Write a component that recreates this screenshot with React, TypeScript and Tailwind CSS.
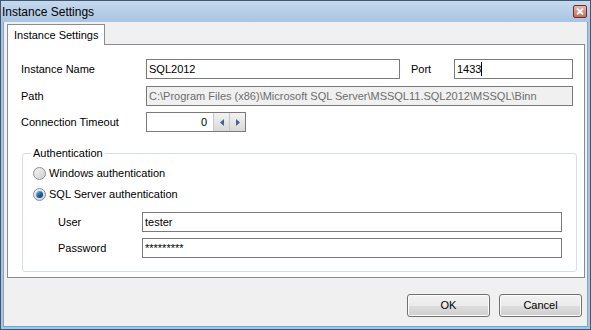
import React from "react";

function TextBox({ value, className = "", disabled = false, caret = false }: { value: string; className?: string; disabled?: boolean; caret?: boolean }) {
  return (
    <div
      className={`h-[20px] border border-[#7a7a7a] flex items-center px-[2px] text-[11px] ${disabled ? "bg-[#f0f0f0] text-[#6d6d6d]" : "bg-white text-black"} ${className}`}
    >
      <span className="whitespace-nowrap">{value}</span>
      {caret && <span className="w-px h-[14px] bg-black" />}
    </div>
  );
}

function Radio({ checked, label }: { checked?: boolean; label: string }) {
  return (
    <div className="flex items-center gap-[3px] h-[14px]">
      <div className="w-[13px] h-[13px] rounded-full border border-[#8e8f8f] bg-gradient-to-br from-[#f4f4f4] to-[#cfcfcf] flex items-center justify-center">
        {checked && (
          <div className="w-[7px] h-[7px] rounded-full bg-gradient-to-br from-[#8fd0f5] via-[#1a6ca8] to-[#0b3c66]" />
        )}
      </div>
      <span className="text-[11px] text-black">{label}</span>
    </div>
  );
}

function SpinArrow({ dir }: { dir: "left" | "right" }) {
  return (
    <div className="w-[16px] h-full bg-gradient-to-b from-[#f3f3f3] to-[#d9d9d9] border-l border-[#c8c8c8] flex items-center justify-center">
      <svg width="4" height="7" viewBox="0 0 4 7">
        {dir === "left" ? <path d="M4 0 L0 3.5 L4 7 Z" fill="#4d6185" /> : <path d="M0 0 L4 3.5 L0 7 Z" fill="#4d6185" />}
      </svg>
    </div>
  );
}

function Button({ label }: { label: string }) {
  return (
    <button className="w-[83px] h-[23px] rounded-[3px] border border-[#707070] bg-[linear-gradient(#f2f2f2_0%,#ebebeb_50%,#dddddd_51%,#cfcfcf_100%)] text-[11px] text-black shadow-[inset_0_0_0_1px_#fcfcfc]">
      {label}
    </button>
  );
}

export default function App() {
  return (
    <div className="w-[591px] h-[330px] bg-[#a9c3e0] border border-[#3e5872] flex flex-col font-['Liberation_Sans',Arial,sans-serif] select-none">
      {/* title bar */}
      <div className="h-[21px] shrink-0 flex items-center justify-between pl-[1px] pr-[3px] bg-gradient-to-b from-[#c6d9ee] to-[#a8c3e1]">
        <span className="text-[12px] text-black">Instance Settings</span>
        <div className="w-[14px] h-[13px] rounded-[2px] border border-[#6e2f25] bg-gradient-to-b from-[#e8b7ab] to-[#c46d5f] flex items-center justify-center">
          <svg width="8" height="7" viewBox="0 0 8 7">
            <path d="M1 0.5 L7 6.5 M7 0.5 L1 6.5" stroke="white" strokeWidth="1.8" />
          </svg>
        </div>
      </div>

      {/* client area */}
      <div className="flex-1 mx-[2px] mb-[2px] bg-[#f0f0f0] border-l border-r border-b border-[#8aa3bd] flex flex-col pl-[3px] pr-[1px] pt-[2px]">
        {/* tab header */}
        <div className="flex h-[20px]">
          <div className="h-[21px] px-[6px] border border-b-0 border-[#898c95] bg-white flex items-center text-[11px] text-black relative z-10">
            Instance Settings
          </div>
        </div>

        {/* tab panel */}
        <div className="h-[234px] w-[578px] bg-white border border-[#898c95] pl-[13px] pt-[14px] flex flex-col">
          <div className="flex items-center h-[20px]">
            <span className="w-[125px] text-[11px] text-black">Instance Name</span>
            <TextBox value="SQL2012" className="w-[254px]" />
            <span className="w-[43px] ml-[11px] text-[11px] text-black">Port</span>
            <TextBox value="1433" className="w-[119px]" caret />
          </div>

          <div className="flex items-center h-[20px] mt-[7px]">
            <span className="w-[125px] text-[11px] text-black">Path</span>
            <TextBox
              value="C:\Program Files (x86)\Microsoft SQL Server\MSSQL11.SQL2012\MSSQL\Binn"
              className="w-[427px]"
              disabled
            />
          </div>

          <div className="flex items-center h-[20px] mt-[6px]">
            <span className="w-[125px] text-[11px] text-black">Connection Timeout</span>
            <div className="w-[100px] h-[20px] border border-[#7a7a7a] bg-white flex">
              <div className="flex-1 flex items-center justify-end pr-[6px] text-[11px] text-black">0</div>
              <SpinArrow dir="left" />
              <SpinArrow dir="right" />
            </div>
          </div>

          {/* group box */}
          <div className="relative mt-[21px] ml-[1px] w-[555px] h-[119px] border border-[#d5dfe5] rounded-[3px] pl-[10px]">
            <span className="absolute -top-[8px] left-[8px] px-[2px] bg-white text-[11px] text-black leading-[14px]">
              Authentication
            </span>
            <div className="mt-[12px]">
              <Radio label="Windows authentication" />
            </div>
            <div className="mt-[7px]">
              <Radio checked label="SQL Server authentication" />
            </div>
            <div className="flex items-center h-[20px] mt-[11px] pl-[25px]">
              <span className="w-[84px] text-[11px] text-black">User</span>
              <TextBox value="tester" className="w-[420px]" />
            </div>
            <div className="flex items-center h-[20px] mt-[6px] pl-[25px]">
              <span className="w-[84px] text-[11px] text-black">Password</span>
              <TextBox value="*********" className="w-[420px]" />
            </div>
          </div>
        </div>

        {/* buttons */}
        <div className="flex justify-end gap-[9px] mt-[16px] pr-[4px]">
          <Button label="OK" />
          <Button label="Cancel" />
        </div>
      </div>
      <div className="h-px bg-[#3ab6e8] mx-[2px] -mt-[3px] mb-[2px]" />
    </div>
  );
}
